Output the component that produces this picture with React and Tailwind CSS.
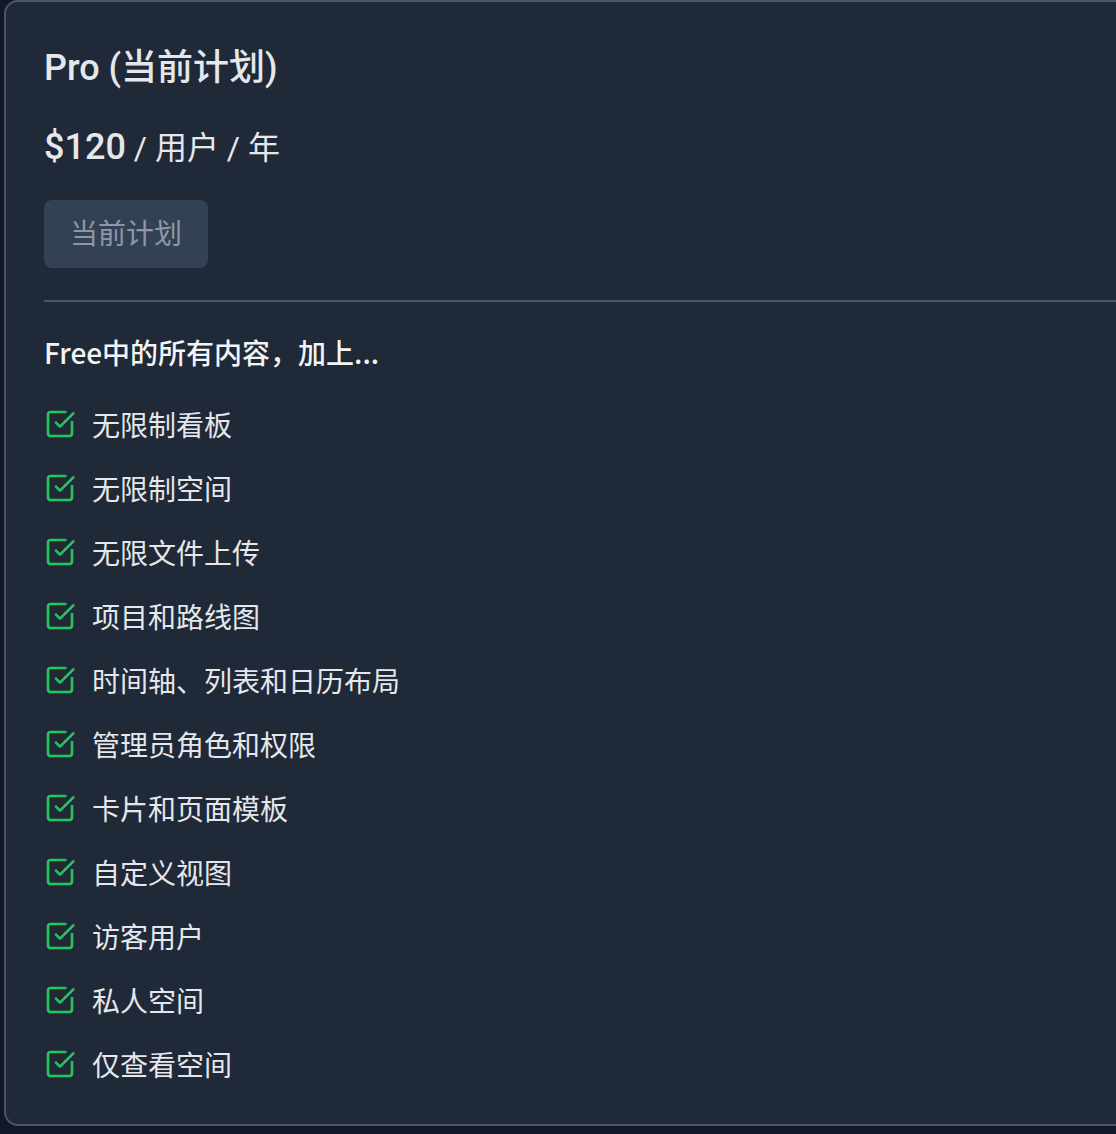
import React from "react";

const items = [
  "无限制看板",
  "无限制空间",
  "无限文件上传",
  "项目和路线图",
  "时间轴、列表和日历布局",
  "管理员角色和权限",
  "卡片和页面模板",
  "自定义视图",
  "访客用户",
  "私人空间",
  "仅查看空间",
];

function CheckIcon() {
  return (
    <svg
      width="32"
      height="32"
      viewBox="0 0 24 24"
      fill="none"
      stroke="#22c55e"
      strokeWidth="2"
      strokeLinecap="round"
      strokeLinejoin="round"
      className="shrink-0"
    >
      <path d="M21 10.5V19a2 2 0 0 1-2 2H5a2 2 0 0 1-2-2V5a2 2 0 0 1 2-2h11" />
      <path d="m9 11 3 3L22 4" />
    </svg>
  );
}

export default function App() {
  return (
    <div className="w-[1116px] h-[1134px] overflow-hidden bg-[#111827]">
      <div
        className="ml-[4px] w-[1200px] h-[1126px] rounded-[14px] border-2 border-[#4b5563] bg-[#1f2937] pl-[38px] pt-[38px] text-[#e5e7eb]"
        style={{ fontFamily: 'Roboto, "Noto Sans CJK SC", sans-serif' }}
      >
        <div className="text-[36px] leading-[56px] font-medium text-[#e5e7eb]">
          Pro (当前计划)
        </div>
        <div className="mt-[30px] h-[48px] leading-[56px] text-[#e5e7eb]">
          <span className="text-[36px] font-medium leading-none">$120</span>
          <span className="text-[32px] leading-none"> / 用户 / 年</span>
        </div>
        <div className="mt-[26px] flex">
          <div
            className="h-[68px] px-[26px] pb-[4px] flex items-center rounded-[8px] bg-[#334155] text-[28px] text-[#8d97a6]"
            style={{ fontFamily: '"Noto Sans CJK SC", sans-serif' }}
          >
            当前计划
          </div>
        </div>
        <div className="mt-[32px] h-[2px] bg-[#4b5563]" />
        <div
          className="mt-[30px] text-[28px] leading-[40px] font-medium text-[#f3f4f6]"
          style={{ fontFamily: '"Noto Sans CJK SC", sans-serif' }}
        >
          Free中的所有内容，加上...
        </div>
        <div
          className="mt-[32px] flex flex-col gap-[24px]"
          style={{ fontFamily: '"Noto Sans CJK SC", sans-serif' }}
        >
          {items.map((t) => (
            <div key={t} className="flex items-center gap-[16px] h-[40px]">
              <CheckIcon />
              <span className="text-[28px] leading-[40px] text-[#e5e7eb]">{t}</span>
            </div>
          ))}
        </div>
      </div>
    </div>
  );
}
